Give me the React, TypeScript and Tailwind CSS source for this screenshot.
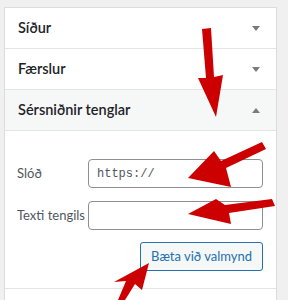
export default function App() {
  const font = { fontFamily: 'Lato, "Noto Sans", sans-serif' };

  const Header = ({ title, open = false }: { title: string; open?: boolean }) => (
    <div
      className={`flex h-[41px] items-center justify-between border-b border-[#e2e4e7] pl-[13px] pr-[16px] ${open ? "bg-[#f6f7f7]" : "bg-white"}`}
    >
      <span className="text-[14.5px] font-semibold text-[#1d2327]">{title}</span>
      <svg width="8" height="5" viewBox="0 0 8 5" className={open ? "rotate-180" : ""}>
        <path d="M0 0h8L4 5z" fill="#787c82" />
      </svg>
    </div>
  );

  return (
    <div className="relative h-[300px] w-[288px] overflow-hidden bg-[#f0f0f1] pl-[4px] pt-[7px]" style={font}>
      <div className="h-[300px] w-[273px] border border-b-0 border-[#dcdcde] bg-white">
        <Header title="Síður" />
        <Header title="Færslur" />
        <Header title="Sérsniðnir tenglar" open />

        <div className="border-b border-[#e2e4e7] pb-[17px] pl-[12px] pr-[13px] pt-[28px]">
          <div className="grid grid-cols-[71px_1fr] items-center gap-y-[13px]">
            <label className="whitespace-nowrap text-[13px] text-[#50575e]">Slóð</label>
            <div className="flex h-[29px] items-center rounded-[4px] border border-[#8c8f94] bg-white px-[8px] text-[12px] text-[#50575e]" style={{ fontFamily: '"Liberation Mono", monospace' }}>
              https://
            </div>
            <label className="whitespace-nowrap text-[13px] text-[#50575e]">Texti tengils</label>
            <div className="h-[29px] rounded-[4px] border border-[#8c8f94] bg-white" />
          </div>
          <div className="mt-[12px] flex justify-end">
            <button className="h-[29px] rounded-[3px] border border-[#2271b1] bg-[#f6f7f7] px-[10px] text-[13px] text-[#2271b1]">
              Bæta við valmynd
            </button>
          </div>
        </div>
      </div>

      {/* red annotation arrows */}
      <svg className="pointer-events-none absolute left-0 top-0" width="288" height="300" viewBox="0 0 288 300">
        <g fill="#cc0000">
          {/* down arrow */}
          <path d="M202 29 L211 28 L214 77 L223 75 L216 117 L198 78 L206 78 Z" />
          {/* arrow to url input */}
          <path d="M262 142 L266 149 L226 168 L231 187 L188 178 L214 151 L221 161 Z" />
          {/* arrow to link text input */}
          <path d="M272 199 L275 206 L229 213 L231 224 L188 214 L216 199 L225 205 Z" />
          {/* arrow to button */}
          <path d="M118 300 L125 300 L135 284 L142 290 L149 263 L114 282 L126 281 Z" />
        </g>
      </svg>
    </div>
  );
}
